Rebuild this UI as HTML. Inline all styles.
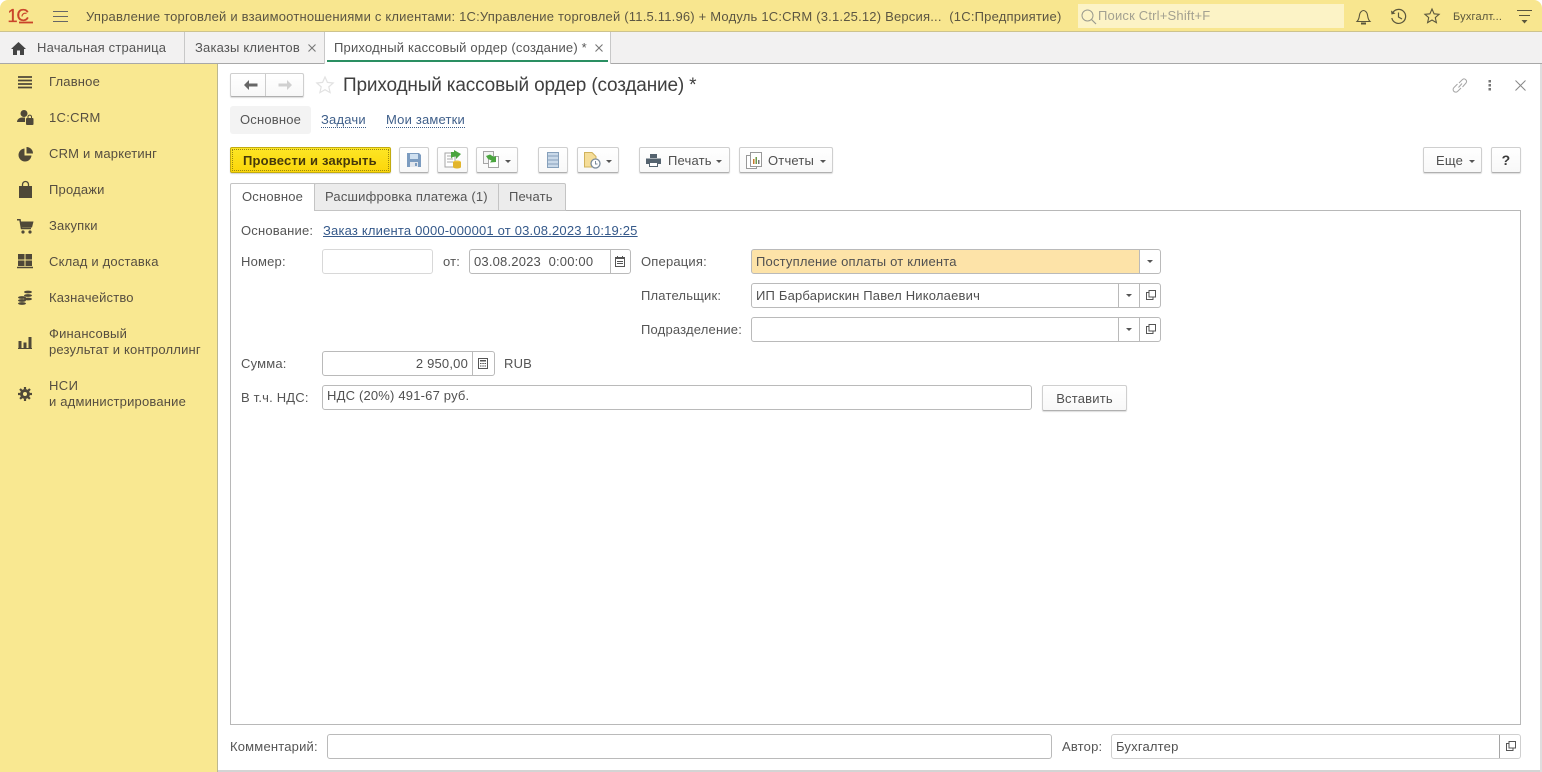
<!DOCTYPE html>
<html lang="ru"><head><meta charset="utf-8"><title>Приходный кассовый ордер</title>
<style>
html,body{margin:0;padding:0;width:1542px;height:772px;overflow:hidden;background:#fff}
body{font-family:"Liberation Sans",Arial,sans-serif;font-size:13px;color:#555;position:relative;letter-spacing:.19px}
.a,.t,.f,.b,svg.a{position:absolute}
.t{white-space:nowrap;line-height:16px}
.f{box-sizing:border-box;border:1px solid #bababa;border-radius:3px;background:#fff;white-space:nowrap;line-height:23px;padding-left:4px;color:#505050}
.b{box-sizing:border-box;border:1px solid #cfcfcf;border-bottom-color:#b0b0b0;border-radius:2px;background:linear-gradient(#fff,#f8f8f8);box-shadow:0 1px 1px rgba(0,0,0,.14);height:26px;line-height:25px;white-space:nowrap;color:#505050}
.d{position:absolute;top:0;bottom:0;width:1px;background:#bababa}
.arr{position:absolute;width:0;height:0;border-left:3px solid transparent;border-right:3px solid transparent;border-top:3px solid #555}
.m{color:#564e40}
.lnk{color:#3f5f8a;border-bottom:1px dotted #3f5f8a;line-height:14px}
svg{overflow:visible}
</style></head><body>

<!-- title bar -->
<div class="a" style="left:0;top:0;width:1542px;height:32px;background:#f8e68f;border-bottom:1px solid #cdc38e;box-sizing:border-box;border-radius:8px 8px 0 0"></div>
<svg class="a" style="left:0;top:0" width="40" height="32"><text x="7.500" y="22" font-family="Liberation Sans" font-size="18" fill="#c9442a" stroke="#c9442a" stroke-width=".3">1</text><text x="16.500" y="21" font-family="Liberation Sans" font-size="17.500" fill="#c9442a" stroke="#c9442a" stroke-width=".3">С</text><path d="M26.500 13.500a3.200 3.200 0 0 0-4.500 3" fill="none" stroke="#c9442a" stroke-width="1.100"/><path d="M19 22.500H33" stroke="#c9442a" stroke-width="1.800"/></svg>
<svg class="a" style="left:53px;top:11px" width="16" height="12"><path d="M0 .5H15M0 5.500H15M0 10.500H15" stroke="#666" fill="none"/></svg>
<div class="t" style="left:86px;top:9px;width:985px;color:#5c5642;letter-spacing:.2px">Управление торговлей и взаимоотношениями с клиентами: 1С:Управление торговлей (11.5.11.96) + Модуль 1С:CRM (3.1.25.12) Версия...&nbsp; (1С:Предприятие)</div>
<div class="a" style="left:1078px;top:4px;width:266px;height:24px;background:#fcf3c6"></div>
<svg class="a" style="left:1081px;top:9px" width="16" height="16"><circle cx="6.500" cy="6.500" r="5.500" fill="none" stroke="#9a9a8e"/><path d="M10.500 10.500L15 15" stroke="#9a9a8e" stroke-width="1.200"/></svg>
<div class="t" style="left:1098px;top:8px;color:#a3a191">Поиск Ctrl+Shift+F</div>
<svg class="a" style="left:1356px;top:8px" width="16" height="18"><path d="M1 13.500c2-2 2-3.500 2.500-6.500C4 4 6 2.500 7.500 2.500S11 4 11.500 7c.5 3 .5 4.500 2.500 6.500z" fill="none" stroke="#5a563c" stroke-width="1.100"/><path d="M5 15.500h5" stroke="#5a563c" stroke-width="2"/></svg>
<svg class="a" style="left:1390px;top:8px" width="18" height="18"><path d="M2.500 5A7 7 0 1 1 1.800 10" fill="none" stroke="#5a563c" stroke-width="1.200"/><path d="M1 2.500L1.500 6.500L5.500 5.500z" fill="#5a563c"/><path d="M8.500 4.500V9L12 11" fill="none" stroke="#5a563c" stroke-width="1.200"/></svg>
<svg class="a" style="left:1424px;top:8px" width="16" height="16"><path d="M8 1l2.100 4.800 5 .5-3.800 3.300 1.100 5L8 12l-4.400 2.600 1.100-5L.9 6.300l5-.5z" fill="none" stroke="#5a563c" stroke-width="1.100"/></svg>
<div class="t" style="left:1453px;top:9px;font-size:11px;color:#5a563c">Бухгалт...</div>
<svg class="a" style="left:1517px;top:10px" width="16" height="15"><path d="M0 .5H15M2 5.500H13" stroke="#5a563c" fill="none"/><path d="M4.500 10h6L7.500 13.500z" fill="#5a563c"/></svg>

<!-- tabs bar -->
<div class="a" style="left:0;top:32px;width:1542px;height:32px;background:#f2f1f1;border-bottom:1px solid #a8a8a8;box-sizing:border-box"></div>
<svg class="a" style="left:11px;top:42px" width="15" height="13"><path d="M7.500 0L15 7h-2v6H9V8.500H6V13H2V7H0z" fill="#444"/></svg>
<div class="t" style="left:37px;top:40px">Начальная страница</div>
<div class="a" style="left:184px;top:32px;width:1px;height:31px;background:#c8c8c8"></div>
<div class="t" style="left:195px;top:40px">Заказы клиентов</div>
<svg class="a" style="left:308px;top:44px" width="8" height="8"><path d="M.5.5l7 7M7.500.5l-7 7" stroke="#777" stroke-width="1.100"/></svg>
<div class="a" style="left:324px;top:32px;width:287px;height:32px;background:#fff;border-left:1px solid #c8c8c8;border-right:1px solid #c8c8c8;box-sizing:border-box"></div>
<div class="t" style="left:334px;top:40px">Приходный кассовый ордер (создание) *</div>
<svg class="a" style="left:595px;top:44px" width="8" height="8"><path d="M.5.5l7 7M7.500.5l-7 7" stroke="#777" stroke-width="1.100"/></svg>
<div class="a" style="left:327px;top:60px;width:281px;height:2px;background:#2a8f62"></div>

<!-- sidebar -->
<div class="a" style="left:0;top:64px;width:218px;height:708px;background:#f9e891;border-right:1px solid #bdb88f;box-sizing:border-box"></div>
<svg class="a" style="left:17px;top:75px" width="16" height="14"><path d="M1 2H15M1 5.500H15M1 9H15M1 12.500H15" stroke="#4f4838" stroke-width="1.800"/></svg>
<div class="t m" style="left:49px;top:74px">Главное</div>
<svg class="a" style="left:17px;top:109px" width="17" height="17"><circle cx="7" cy="4.500" r="3.500" fill="#4f4838"/><path d="M0 13c0-3 3-4.500 5-4.500h3V13z" fill="#4f4838"/><rect x="9" y="9" width="7.500" height="7" rx="1" fill="#4f4838"/><path d="M11 9.500V7.500a1.800 1.800 0 0 1 3.500 0v2" stroke="#4f4838" fill="none"/></svg>
<div class="t m" style="left:49px;top:110px;letter-spacing:.3px">1С:CRM</div>
<svg class="a" style="left:18px;top:147px" width="15" height="15"><path d="M6.500 1.500A6.500 6.500 0 1 0 13.500 8.500H6.500z" fill="#4f4838"/><path d="M8.500 0A6.500 6.500 0 0 1 15 6.500H8.500z" fill="#4f4838"/></svg>
<div class="t m" style="left:49px;top:146px">CRM и маркетинг</div>
<svg class="a" style="left:19px;top:181px" width="13" height="17"><rect y="5" width="13" height="12" fill="#4f4838"/><path d="M3.500 8V3.500a3 3 0 0 1 6 0V8" stroke="#4f4838" fill="none" stroke-width="1.300"/></svg>
<div class="t m" style="left:49px;top:182px">Продажи</div>
<svg class="a" style="left:17px;top:219px" width="17" height="15"><path d="M0 .8H3L4.500 9.500H14" fill="none" stroke="#4f4838" stroke-width="1.500"/><path d="M3.500 2.500H16.500L15 8.500H4.500z" fill="#4f4838"/><circle cx="6" cy="13" r="1.600" fill="#4f4838"/><circle cx="13" cy="13" r="1.600" fill="#4f4838"/></svg>
<div class="t m" style="left:49px;top:218px">Закупки</div>
<svg class="a" style="left:17px;top:254px" width="16" height="15"><path d="M1 0h6.500v5.500H1zM8.500 0H15v5.500H8.500zM1 6.500h6.500V12H1zM8.500 6.500H15V12H8.500z" fill="#4f4838"/><path d="M0 13.500H16" stroke="#4f4838" stroke-width="1.500"/></svg>
<div class="t m" style="left:49px;top:254px">Склад и доставка</div>
<svg class="a" style="left:18px;top:290px" width="14" height="15"><g fill="#4f4838"><ellipse cx="10" cy="2" rx="4" ry="1.400"/><ellipse cx="10" cy="5.500" rx="4" ry="1.400"/><ellipse cx="10" cy="9" rx="4" ry="1.400"/><ellipse cx="4" cy="7.500" rx="4" ry="1.400"/><ellipse cx="4" cy="10.500" rx="4" ry="1.400"/><ellipse cx="4" cy="13.500" rx="4" ry="1.400"/></g></svg>
<div class="t m" style="left:49px;top:290px">Казначейство</div>
<svg class="a" style="left:18px;top:336px" width="14" height="13"><path d="M.5 5h3v7h-3zM5.500 6.500h3V12h-3zM10.500 1h3v11h-3z" fill="#4f4838"/><path d="M0 12.500H14" stroke="#4f4838"/></svg>
<div class="t m" style="left:49px;top:326px">Финансовый</div>
<div class="t m" style="left:49px;top:342px">результат и контроллинг</div>
<svg class="a" style="left:18px;top:387px" width="14" height="14"><circle cx="7" cy="7" r="3.500" fill="none" stroke="#4f4838" stroke-width="3"/><path d="M7 0V14M0 7H14M2 2L12 12M12 2L2 12" stroke="#4f4838" stroke-width="2.200" stroke-dasharray="2.300 9.400"/></svg>
<div class="t m" style="left:49px;top:378px;letter-spacing:.4px">НСИ</div>
<div class="t m" style="left:49px;top:394px">и администрирование</div>

<!-- header -->
<div class="b" style="left:230px;top:73px;width:74px;height:24px"></div>
<div class="a" style="left:265px;top:74px;width:1px;height:22px;background:#ccc"></div>
<svg class="a" style="left:244px;top:80px" width="14" height="10"><path d="M5 0v3.500h8.500V6.500H5V10L0 5z" fill="#666"/></svg>
<svg class="a" style="left:278px;top:80px" width="14" height="10"><path d="M9 0v3.500H.5V6.500H9V10l5-5z" fill="#d0d0d0"/></svg>
<svg class="a" style="left:316px;top:76px" width="18" height="18"><path d="M9 1l2.400 5.400 5.800.6-4.400 3.900 1.300 5.700L9 13.700l-5.100 2.900 1.300-5.700L.8 7l5.800-.6z" fill="none" stroke="#e2e2e2" stroke-width="1.200"/></svg>
<div class="t" style="left:343px;top:74px;font-size:19px;line-height:23px;color:#404040;letter-spacing:-.16px">Приходный кассовый ордер (создание) *</div>
<svg class="a" style="left:1452px;top:78px" width="16" height="15"><path d="M6.500 9.500L10 5.500M5.500 6L2 9.500a2.500 2.500 0 0 0 3.500 4L9 10M7 5l3.500-3.500a2.500 2.500 0 0 1 3.500 3.500L10.500 9" fill="none" stroke="#a5a5a5" stroke-width="1"/></svg>
<svg class="a" style="left:1488px;top:80px" width="4" height="11"><g fill="#777"><rect x=".5" width="2.500" height="2.500"/><rect x=".5" y="4" width="2.500" height="2.500"/><rect x=".5" y="8" width="2.500" height="2.500"/></g></svg>
<svg class="a" style="left:1515px;top:80px" width="11" height="11"><path d="M.5.500l10 10M10.500.500l-10 10" stroke="#888" stroke-width="1"/></svg>

<div class="a" style="left:230px;top:106px;width:81px;height:28px;background:#f3f3f3;border-radius:3px"></div>
<div class="t" style="left:240px;top:112px">Основное</div>
<div class="t lnk" style="left:321px;top:113px">Задачи</div>
<div class="t lnk" style="left:386px;top:113px">Мои заметки</div>

<!-- command bar -->
<div class="a" style="left:230px;top:147px;width:161px;height:26px;box-sizing:border-box;background:linear-gradient(#fde625,#fbd60a);border:1px solid #c2ab10;border-radius:2px;box-shadow:0 1px 1px rgba(0,0,0,.18)"></div>
<div class="a" style="left:232px;top:149px;width:157px;height:22px;box-sizing:border-box;border:1px dotted #9a8810"></div>
<div class="t" style="left:243px;top:153px;font-weight:bold;color:#46390a">Провести и закрыть</div>

<div class="b" style="left:399px;top:147px;width:30px"></div>
<svg class="a" style="left:407px;top:153px" width="14" height="14"><path d="M0 0h12l2 2v12H0z" fill="#7c9cc0"/><rect x="3" y="1" width="8" height="5" fill="#cfe0f0"/><rect x="3" y="9" width="8" height="5" fill="#e2e6ec"/><rect x="8" y="10" width="2" height="3" fill="#7c9cc0"/></svg>
<div class="b" style="left:437px;top:147px;width:31px"></div>
<svg class="a" style="left:444px;top:151px" width="18" height="18"><path d="M1 2h10v14H1z" fill="#fff" stroke="#a5a5a5"/><path d="M3 5h6M3 8h6M3 11h6" stroke="#a8a8a8"/><path d="M7 1h3V-1l7 4-5 5V5.500c-2 0-4 .5-5 2z" fill="#4aa53f"/><ellipse cx="13" cy="11" rx="4" ry="1.500" fill="#eec53b"/><path d="M9 11v5c0 2 8 2 8 0v-5" fill="#e2b52d"/></svg>
<div class="b" style="left:476px;top:147px;width:42px"></div>
<svg class="a" style="left:483px;top:151px" width="18" height="18"><rect x=".5" y=".5" width="10" height="12" fill="#f4f4f4" stroke="#a5a5a5"/><rect x="5.500" y="5.500" width="10" height="11" fill="#fff" stroke="#a5a5a5"/><path d="M3 5l4-1.500L11 6l2-1v6l-6 .5 1.500-2L5 8z" fill="#4aa53f"/></svg>
<div class="arr" style="left:505px;top:160px"></div>
<div class="b" style="left:538px;top:147px;width:30px"></div>
<svg class="a" style="left:547px;top:152px" width="12" height="16"><rect x=".5" y=".5" width="11" height="15" fill="#c9d9e9" stroke="#86a0bb"/><path d="M1 4h10M1 8h10M1 12h10" stroke="#86a0bb"/></svg>
<div class="b" style="left:577px;top:147px;width:42px"></div>
<svg class="a" style="left:584px;top:152px" width="18" height="17"><path d="M.5.500H8l4 4V15H.5z" fill="#f5dd98" stroke="#d0b25c"/><circle cx="11.500" cy="11.500" r="4.500" fill="#fff" stroke="#7a8b9b" stroke-width="1.300"/><path d="M11.500 9v3h2" stroke="#7a8b9b" fill="none"/></svg>
<div class="arr" style="left:606px;top:160px"></div>
<div class="b" style="left:639px;top:147px;width:91px;padding-left:28px">Печать</div>
<svg class="a" style="left:646px;top:154px" width="15" height="13"><path d="M4 0h7v4H4zM0 4.500h15V10h-3V8H3v2H0z" fill="#55636f"/><rect x="3.500" y="8.500" width="8" height="4" fill="#fff" stroke="#55636f"/></svg>
<div class="arr" style="left:716px;top:160px"></div>
<div class="b" style="left:739px;top:147px;width:94px;padding-left:28px">Отчеты</div>
<svg class="a" style="left:746px;top:152px" width="16" height="17"><rect x=".5" y="3.500" width="10" height="13" fill="#fff" stroke="#999"/><rect x="4.500" y=".5" width="11" height="14" fill="#fff" stroke="#999"/><path d="M7 7h1.500v5H7z" fill="#c9762d"/><path d="M9.500 5h1.500v7H9.500z" fill="#6d9a4a"/><path d="M12 8h1.500v4H12z" fill="#777"/></svg>
<div class="arr" style="left:820px;top:160px"></div>
<div class="b" style="left:1423px;top:147px;width:59px;padding-left:12px">Еще</div>
<div class="arr" style="left:1469px;top:160px"></div>
<div class="b" style="left:1491px;top:147px;width:30px;text-align:center;font-weight:bold;font-size:14px;color:#3a3a3a">?</div>

<!-- form tabs -->
<div class="a" style="left:230px;top:210px;width:1291px;height:515px;box-sizing:border-box;border:1px solid #b8b8b8;background:#fff"></div>
<div class="a" style="left:314px;top:183px;width:185px;height:28px;box-sizing:border-box;background:#ececec;border:1px solid #c4c4c4;border-radius:2px 0 0 0"></div>
<div class="a" style="left:498px;top:183px;width:68px;height:28px;box-sizing:border-box;background:#ececec;border:1px solid #c4c4c4;border-radius:0 2px 0 0"></div>
<div class="a" style="left:230px;top:183px;width:85px;height:28px;box-sizing:border-box;background:#fff;border:1px solid #c4c4c4;border-bottom:0;border-radius:2px 0 0 0"></div>
<div class="t" style="left:242px;top:189px">Основное</div>
<div class="t" style="left:325px;top:189px">Расшифровка платежа (1)</div>
<div class="t" style="left:509px;top:189px">Печать</div>

<!-- form -->
<div class="t" style="left:241px;top:223px">Основание:</div>
<div class="t" style="left:323px;top:223px;color:#35598a;text-decoration:underline">Заказ клиента 0000-000001 от 03.08.2023 10:19:25</div>

<div class="t" style="left:241px;top:254px">Номер:</div>
<div class="f" style="left:322px;top:249px;width:111px;height:25px;border-color:#d8d8d8"></div>
<div class="t" style="left:443px;top:254px">от:</div>
<div class="f" style="left:469px;top:249px;width:162px;height:25px">03.08.2023&nbsp; 0:00:00<div class="d" style="left:140px"></div></div>
<svg class="a" style="left:615px;top:256px" width="10" height="11"><rect x=".5" y="1.500" width="9" height="9" fill="none" stroke="#555"/><path d="M1 3h8V2H1zM2 5h6v1H2zM2 7h6v1H2z" fill="#555"/><path d="M2.500 0v2M7.500 0v2" stroke="#555"/></svg>

<div class="t" style="left:641px;top:254px">Операция:</div>
<div class="f" style="left:751px;top:249px;width:410px;height:25px;background:linear-gradient(90deg,#fde3a8 0,#fde3a8 387px,#fff 387px)">Поступление оплаты от клиента<div class="d" style="left:387px"></div></div>
<div class="arr" style="left:1147px;top:260px"></div>

<div class="t" style="left:641px;top:288px">Плательщик:</div>
<div class="f" style="left:751px;top:283px;width:410px;height:25px">ИП Барбарискин Павел Николаевич<div class="d" style="left:366px"></div><div class="d" style="left:387px"></div></div>
<div class="arr" style="left:1126px;top:294px"></div>
<svg class="a" style="left:1146px;top:290px" width="10" height="10"><path d="M3 .5h6.500V7H3zM3 2.500H.5v7H7V7" fill="none" stroke="#555"/></svg>

<div class="t" style="left:641px;top:322px">Подразделение:</div>
<div class="f" style="left:751px;top:317px;width:410px;height:25px"><div class="d" style="left:366px"></div><div class="d" style="left:387px"></div></div>
<div class="arr" style="left:1126px;top:328px"></div>
<svg class="a" style="left:1146px;top:324px" width="10" height="10"><path d="M3 .5h6.500V7H3zM3 2.500H.5v7H7V7" fill="none" stroke="#555"/></svg>

<div class="t" style="left:241px;top:356px">Сумма:</div>
<div class="f" style="left:322px;top:351px;width:173px;height:25px;padding:0 26px 0 0;text-align:right">2 950,00<div class="d" style="left:149px"></div></div>
<svg class="a" style="left:478px;top:358px" width="10" height="11"><rect x=".5" y=".5" width="9" height="10" fill="none" stroke="#555"/><path d="M2 2h6v1.500H2zM2 5h1.500v1H2zM4.300 5h1.500v1H4.300zM6.500 5H8v1H6.500zM2 7.500h1.500v1H2zM4.300 7.500h1.500v1H4.300zM6.500 7.500H8v1H6.500z" fill="#555"/></svg>
<div class="t" style="left:504px;top:356px;letter-spacing:.2px">RUB</div>

<div class="t" style="left:241px;top:390px">В т.ч. НДС:</div>
<div class="f" style="left:322px;top:385px;width:710px;height:25px;line-height:19px">НДС (20%) 491-67 руб.</div>
<div class="b" style="left:1042px;top:385px;width:85px;text-align:center">Вставить</div>

<!-- footer -->
<div class="t" style="left:230px;top:739px">Комментарий:</div>
<div class="f" style="left:327px;top:734px;width:725px;height:25px"></div>
<div class="t" style="left:1062px;top:739px">Автор:</div>
<div class="f" style="left:1111px;top:734px;width:410px;height:25px;border-color:#cfcfcf">Бухгалтер<div class="d" style="left:387px;background:#a5a5a5"></div></div>
<svg class="a" style="left:1506px;top:741px" width="10" height="10"><path d="M3 .5h6.500V7H3zM3 2.500H.5v7H7V7" fill="none" stroke="#555"/></svg>

<div class="a" style="left:218px;top:770px;width:1324px;height:2px;background:#d4d4d4"></div>
<div class="a" style="left:1540px;top:64px;width:2px;height:708px;background:#dedede"></div>
</body></html>
